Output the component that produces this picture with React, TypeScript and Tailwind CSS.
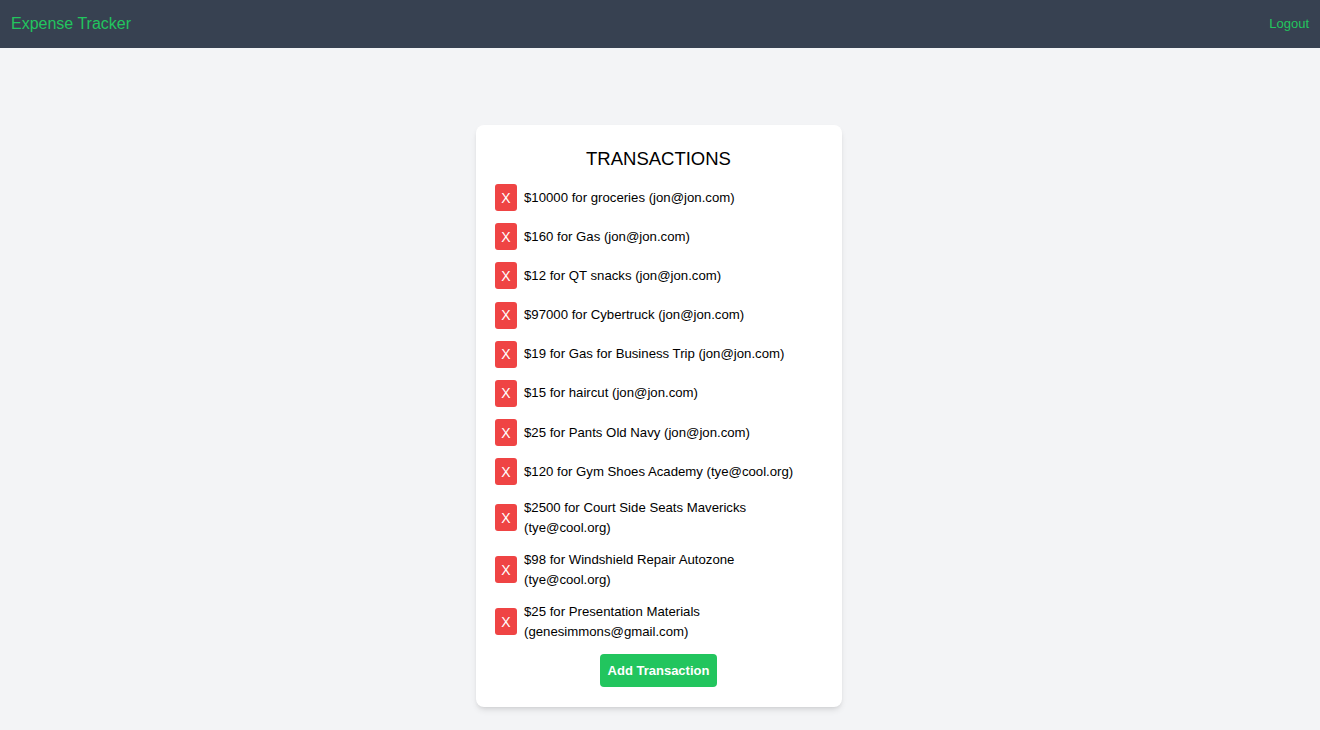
const transactions = [
  { amount: 10000, label: "groceries", email: "jon@jon.com" },
  { amount: 160, label: "Gas", email: "jon@jon.com" },
  { amount: 12, label: "QT snacks", email: "jon@jon.com" },
  { amount: 97000, label: "Cybertruck", email: "jon@jon.com" },
  { amount: 19, label: "Gas for Business Trip", email: "jon@jon.com" },
  { amount: 15, label: "haircut", email: "jon@jon.com" },
  { amount: 25, label: "Pants Old Navy", email: "jon@jon.com" },
  { amount: 120, label: "Gym Shoes Academy", email: "tye@cool.org" },
  { amount: 2500, label: "Court Side Seats Mavericks", email: "tye@cool.org" },
  { amount: 98, label: "Windshield Repair Autozone", email: "tye@cool.org" },
  { amount: 25, label: "Presentation Materials", email: "genesimmons@gmail.com" },
]

export default function App() {
  return (
    <div className="min-h-screen bg-[#f3f4f6] font-['Liberation_Sans',Arial,sans-serif] text-black">
      <nav className="flex h-12 items-center justify-between bg-[#374151] px-[11px]">
        <span className="text-[16px] text-[#22c55e]">Expense Tracker</span>
        <button className="text-[13px] text-[#22c55e]">Logout</button>
      </nav>

      <div className="mx-auto mt-[77px] w-[366px] -translate-x-px rounded-lg bg-white p-5 pl-[19px] shadow-md">
        <h2 className="mb-[11px] text-center text-[18.5px] leading-7">TRANSACTIONS</h2>
        <ul>
          {transactions.map((t, i) => (
            <li key={i} className="mb-[12.2px] flex items-center gap-[7px]">
              <button className="flex h-[27px] w-[22px] shrink-0 items-center justify-center rounded-[3px] bg-[#ef4444] text-sm text-white">
                X
              </button>
              <span className="max-w-[280px] text-[13.2px] leading-5">
                ${t.amount} for {t.label} ({t.email})
              </span>
            </li>
          ))}
        </ul>
        <div className="flex justify-center">
          <button className="h-[33px] rounded bg-[#22c55e] px-2 text-[13px] font-bold text-white">
            Add Transaction
          </button>
        </div>
      </div>
    </div>
  )
}
